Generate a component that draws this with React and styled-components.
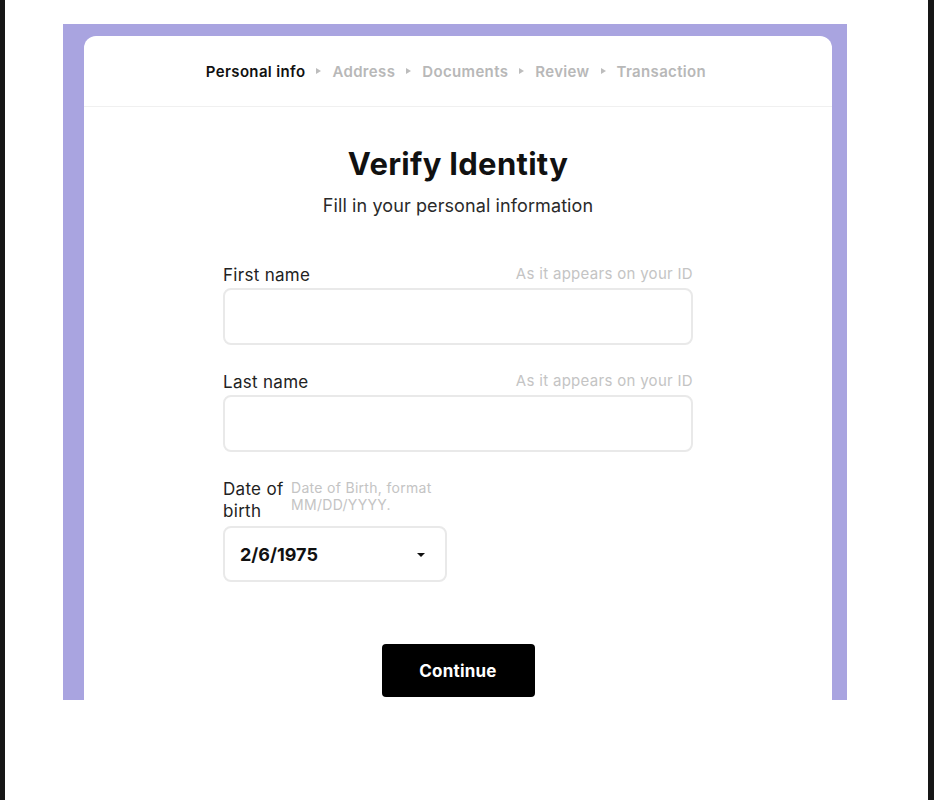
import React from 'react'
import styled, { createGlobalStyle } from 'styled-components'

const GlobalStyle = createGlobalStyle`
    html, body {
        margin: 0;
        padding: 0;
        background: #ffffff;
    }
    body {
        font-family: Inter, "Noto Sans", "Liberation Sans", sans-serif;
        color: #111;
    }
`

const steps = ['Personal info', 'Address', 'Documents', 'Review', 'Transaction']

const Page = styled.div`
    box-sizing: border-box;
    width: 934px;
    height: 800px;
    border-left: 5px solid #161616;
    border-right: 6px solid #161616;
    background: #ffffff;
    padding-top: 24px;
`

const Frame = styled.div`
    box-sizing: border-box;
    margin-left: 58px;
    width: 784px;
    height: 676px;
    background: #a9a4e0;
    padding: 12px 15px 0 21px;
    overflow: hidden;
`

const Card = styled.div`
    background: #ffffff;
    border-radius: 12px 12px 0 0;
    height: 100%;
    display: flex;
    flex-direction: column;
`

const Stepper = styled.nav`
    height: 70px;
    border-bottom: 1px solid #f0f0f0;
    display: flex;
    align-items: center;
    justify-content: center;
    gap: 11px;
    padding-right: 4px;
`

const Step = styled.span`
    font-size: 15px;
    font-weight: 600;
    letter-spacing: 0.35px;
    color: ${(props) => (props.$active ? '#111111' : '#b8b8b8')};
`

const Arrow = styled.span`
    width: 0;
    height: 0;
    border-top: 3px solid transparent;
    border-bottom: 3px solid transparent;
    border-left: 5px solid #bdbdbd;
`

const Body = styled.div`
    display: flex;
    flex-direction: column;
    align-items: center;
    padding-top: 39px;
`

const Title = styled.h1`
    margin: 0;
    font-size: 31px;
    line-height: 36px;
    font-weight: 700;
    letter-spacing: 0.3px;
    color: #111;
`

const Subtitle = styled.p`
    margin: 12px 0 0;
    font-size: 18px;
    line-height: 24px;
    letter-spacing: 0.1px;
    color: #2a2a2a;
`

const Form = styled.form`
    width: 470px;
    margin-top: 46px;
    display: flex;
    flex-direction: column;
    gap: 26px;
`

const Field = styled.div`
    width: ${(props) => props.$width || '100%'};
    display: flex;
    flex-direction: column;
`

const LabelRow = styled.div`
    display: flex;
    justify-content: ${(props) => (props.$tight ? 'flex-start' : 'space-between')};
    align-items: ${(props) => (props.$tight ? 'flex-start' : 'center')};
    gap: 2px;
    margin-bottom: ${(props) => (props.$tight ? '4px' : '2px')};
`

const Label = styled.label`
    flex: 0 1 auto;
    font-size: 17px;
    line-height: 22px;
    letter-spacing: 0.3px;
    color: #222;
`

const Hint = styled.span`
    flex: 0 0 auto;
    width: ${(props) => props.$width || 'auto'};
    font-size: ${(props) => (props.$small ? '14px' : '15px')};
    line-height: 17px;
    letter-spacing: 0.3px;
    color: #c4c4c4;
    margin-top: ${(props) => (props.$small ? '1px' : '-4px')};
`

const Input = styled.input`
    box-sizing: border-box;
    width: 100%;
    height: 57px;
    border: 2px solid #e9e9e9;
    border-radius: 8px;
    background: #fff;
    padding: 0 16px;
    font: inherit;
    font-size: 17px;
    outline: none;
`

const Select = styled.div`
    box-sizing: border-box;
    height: 56px;
    border: 2px solid #e9e9e9;
    border-radius: 8px;
    display: flex;
    align-items: center;
    justify-content: space-between;
    padding: 0 20px 0 15px;
    font-size: 18px;
    font-weight: 700;
    color: #111;
`

const Caret = styled.span`
    width: 0;
    height: 0;
    border-left: 4px solid transparent;
    border-right: 4px solid transparent;
    border-top: 4px solid #111;
    margin-top: 2px;
`

const Button = styled.button`
    margin-top: 62px;
    width: 153px;
    height: 53px;
    border: none;
    border-radius: 4px;
    background: #000;
    color: #fff;
    font-family: inherit;
    font-size: 17px;
    font-weight: 700;
    letter-spacing: 0.2px;
    cursor: pointer;
`

function TextField({ label, hint }) {
    return (
        <Field>
            <LabelRow>
                <Label>{label}</Label>
                <Hint>{hint}</Hint>
            </LabelRow>
            <Input type="text" />
        </Field>
    )
}

export default function App() {
    return (
        <Page>
            <GlobalStyle />
            <Frame>
                <Card>
                    <Stepper>
                        {steps.map((step, i) => (
                            <React.Fragment key={step}>
                                {i > 0 && <Arrow />}
                                <Step $active={i === 0}>{step}</Step>
                            </React.Fragment>
                        ))}
                    </Stepper>
                    <Body>
                        <Title>Verify Identity</Title>
                        <Subtitle>Fill in your personal information</Subtitle>
                        <Form onSubmit={(e) => e.preventDefault()}>
                            <TextField label="First name" hint="As it appears on your ID" />
                            <TextField label="Last name" hint="As it appears on your ID" />
                            <Field $width="224px">
                                <LabelRow $tight>
                                    <Label>Date of birth</Label>
                                    <Hint $small $width="156px">
                                        Date of Birth, format MM/DD/YYYY.
                                    </Hint>
                                </LabelRow>
                                <Select>
                                    <span>2/6/1975</span>
                                    <Caret />
                                </Select>
                            </Field>
                        </Form>
                        <Button type="button">Continue</Button>
                    </Body>
                </Card>
            </Frame>
        </Page>
    )
}
